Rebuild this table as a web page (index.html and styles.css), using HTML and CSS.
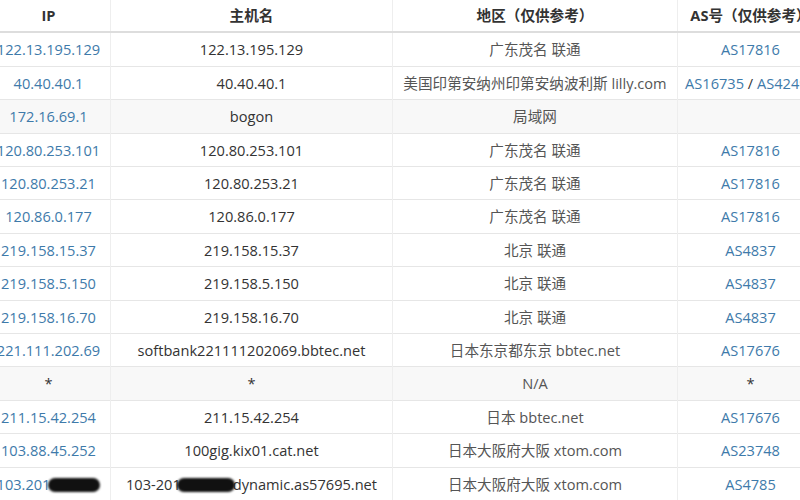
FILE: index.html
```html
<!DOCTYPE html>
<html lang="zh-CN">
<head>
    <meta charset="UTF-8">
    <meta name="viewport" content="width=device-width, initial-scale=1.0">
    <title>Traceroute</title>
    <link rel="stylesheet" href="styles.css">
</head>
<body>
    <table class="trace">
        <colgroup>
            <col class="c-ip">
            <col class="c-host">
            <col class="c-geo">
            <col class="c-as">
        </colgroup>
        <thead>
            <tr>
                <th>IP</th>
                <th>主机名</th>
                <th>地区（仅供参考）</th>
                <th>AS号（仅供参考）</th>
            </tr>
        </thead>
        <tbody>
            <tr>
                <td><a href="#">122.13.195.129</a></td>
                <td>122.13.195.129</td>
                <td>广东茂名 联通</td>
                <td><a href="#">AS17816</a></td>
            </tr>
            <tr>
                <td><a href="#">40.40.40.1</a></td>
                <td>40.40.40.1</td>
                <td>美国印第安纳州印第安纳波利斯 lilly.com</td>
                <td><a href="#">AS16735</a> / <a href="#">AS42496</a></td>
            </tr>
            <tr class="grey">
                <td><a href="#">172.16.69.1</a></td>
                <td>bogon</td>
                <td>局域网</td>
                <td></td>
            </tr>
            <tr>
                <td><a href="#">120.80.253.101</a></td>
                <td>120.80.253.101</td>
                <td>广东茂名 联通</td>
                <td><a href="#">AS17816</a></td>
            </tr>
            <tr>
                <td><a href="#">120.80.253.21</a></td>
                <td>120.80.253.21</td>
                <td>广东茂名 联通</td>
                <td><a href="#">AS17816</a></td>
            </tr>
            <tr>
                <td><a href="#">120.86.0.177</a></td>
                <td>120.86.0.177</td>
                <td>广东茂名 联通</td>
                <td><a href="#">AS17816</a></td>
            </tr>
            <tr>
                <td><a href="#">219.158.15.37</a></td>
                <td>219.158.15.37</td>
                <td>北京 联通</td>
                <td><a href="#">AS4837</a></td>
            </tr>
            <tr>
                <td><a href="#">219.158.5.150</a></td>
                <td>219.158.5.150</td>
                <td>北京 联通</td>
                <td><a href="#">AS4837</a></td>
            </tr>
            <tr>
                <td><a href="#">219.158.16.70</a></td>
                <td>219.158.16.70</td>
                <td>北京 联通</td>
                <td><a href="#">AS4837</a></td>
            </tr>
            <tr>
                <td><a href="#">221.111.202.69</a></td>
                <td>softbank221111202069.bbtec.net</td>
                <td>日本东京都东京 bbtec.net</td>
                <td><a href="#">AS17676</a></td>
            </tr>
            <tr class="grey">
                <td>*</td>
                <td>*</td>
                <td>N/A</td>
                <td>*</td>
            </tr>
            <tr>
                <td><a href="#">211.15.42.254</a></td>
                <td>211.15.42.254</td>
                <td>日本 bbtec.net</td>
                <td><a href="#">AS17676</a></td>
            </tr>
            <tr>
                <td><a href="#">103.88.45.252</a></td>
                <td>100gig.kix01.cat.net</td>
                <td>日本大阪府大阪 xtom.com</td>
                <td><a href="#">AS23748</a></td>
            </tr>
            <tr>
                <td><a href="#">103.201<span class="blot ip-blot"></span></a></td>
                <td>103-201<span class="blot host-blot"></span>dynamic.as57695.net</td>
                <td>日本大阪府大阪 xtom.com</td>
                <td><a href="#">AS4785</a></td>
            </tr>
        </tbody>
    </table>
</body>
</html>
```

FILE: styles.css
```css
body {
    margin: 0;
    background-color: #fff;
    font-family: 'Open Sans', 'Noto Sans CJK SC', sans-serif;
    font-size: 14.6px;
    color: #333;
    overflow: hidden;
}
.trace {
    border-collapse: collapse;
    table-layout: fixed;
    width: 837px;
    margin-left: -14px;
    margin-top: -1px;
}
.c-ip {
    width: 124px;
}
.c-host {
    width: 282px;
}
.c-geo {
    width: 285px;
}
.c-as {
    width: 146px;
}
.trace th, .trace td {
    padding: 6px 6px;
    line-height: 20.4px;
    text-align: center;
    white-space: nowrap;
    border-left: 1px solid #eee;
    border-right: 1px solid #eee;
}
.trace th {
    font-weight: bold;
    color: #333;
    border-bottom: 2px solid #ddd;
}
.trace td {
    border-top: 1px solid #e6e6e6;
}
.trace td:nth-child(3) {
    color: #555;
}
.trace tr.grey td {
    background-color: #f8f8f8;
}
.trace a {
    color: #3e7aaa;
    text-decoration: none;
}
.blot {
    display: inline-block;
    height: 14px;
    vertical-align: -2px;
    background-color: #111;
    border-radius: 8px;
    filter: blur(1px);
}
.ip-blot {
    width: 52px;
    margin-left: -2px;
}
.host-blot {
    width: 58px;
    margin-left: -4px;
    margin-right: -2px;
}
```
